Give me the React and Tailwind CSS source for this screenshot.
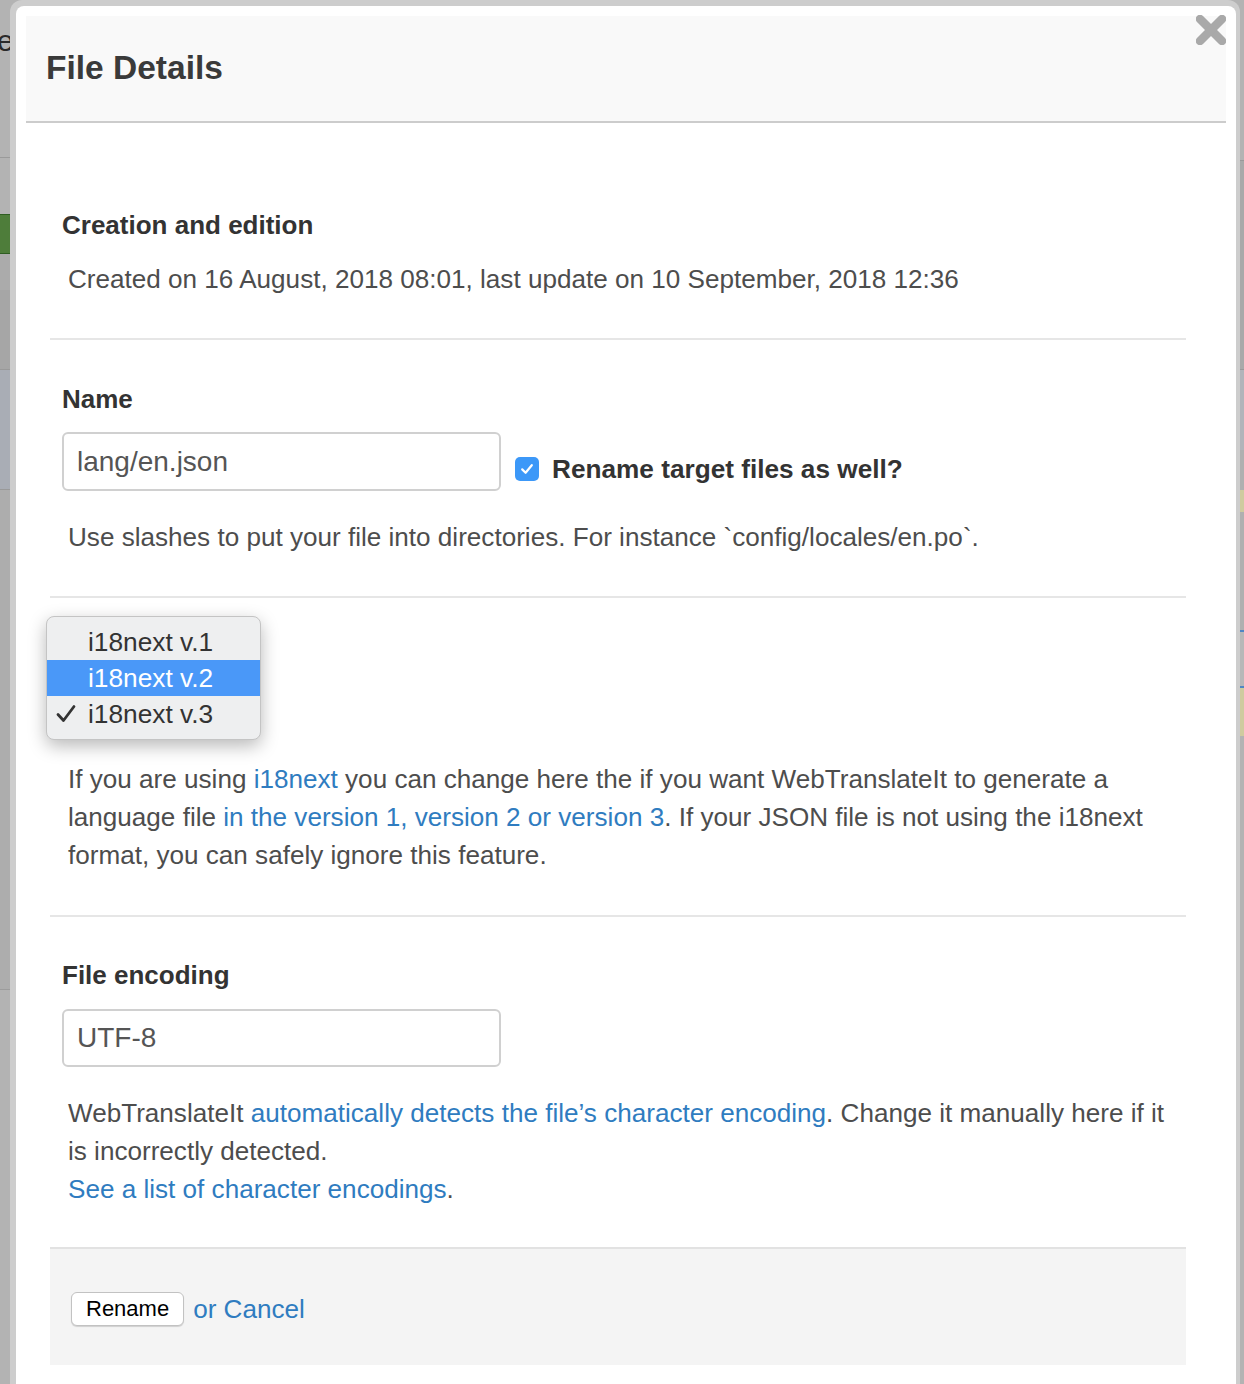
import React from "react";

const Link = ({ children }) => <span className="text-[#2f7cc0]">{children}</span>;

function CloseX() {
  return (
    <svg width="30" height="30" viewBox="0 0 30 30" className="block">
      <line x1="4" y1="4" x2="26" y2="26" stroke="#a9a9a9" strokeWidth="8.5" strokeLinecap="round" />
      <line x1="26" y1="4" x2="4" y2="26" stroke="#a9a9a9" strokeWidth="8.5" strokeLinecap="round" />
    </svg>
  );
}

function Hr() {
  return <div className="h-[2px] bg-[#e6e6e6]" />;
}

export default function App() {
  return (
    <div className="relative w-[1244px] h-[1384px] overflow-hidden bg-[#b3b3b3] font-['Liberation_Sans',Arial,sans-serif]">
      {/* dimmed page behind the modal */}
      <div className="flex justify-between h-full">
        <div className="w-[10px] flex flex-col">
          <div className="h-[24px]" />
          <div className="h-[34px] text-[30px] leading-[34px] text-[#2a2a2a] -ml-[3px] whitespace-nowrap">e</div>
          <div className="h-[60px]" />
          <div className="h-[20px] w-[6px] ml-[10px] border-2 border-[#2d6aa3]" />
          <div className="h-[20px] border-b border-[#9a9a9a]" />
          <div className="h-[56px]" />
          <div className="h-[40px] bg-[#4e7d3a] border-y border-[#2f5e22]" />
          <div className="h-[36px] bg-[#ababab]" />
          <div className="h-[80px] bg-[#a6a6a6] border-b border-[#999]" />
          <div className="h-[120px] bg-[#a9adb5] border-b border-[#999]" />
          <div className="h-[500px] bg-[#adadad] border-b border-[#9c9c9c]" />
        </div>
        <div className="w-[4px] flex flex-col">
          <div className="h-[160px]" />
          <div className="h-[210px] bg-[#a9a9a9] border-y border-[#999]" />
          <div className="h-[80px] bg-[#b1b4ba]" />
          <div className="h-[40px] bg-[#b0b0b0]" />
          <div className="h-[22px] bg-[#cfcb9f]" />
          <div className="h-[120px] bg-[#b0b0b0] border-b-2 border-[#4f86c4]" />
          <div className="h-[56px] bg-[#b8b8b8] border-b-2 border-[#4f86c4]" />
          <div className="h-[48px] bg-[#cfcb9f]" />
        </div>
      </div>

      {/* modal */}
      <div className="absolute left-[10px] top-0 w-[1230px] h-[1400px] rounded-t-[12px] bg-[#cdcdcd] pl-[6px] pr-[4px] pt-[6px]">
        <div className="h-full bg-white rounded-t-[8px] pt-[10px]">
          {/* header */}
          <div className="relative mx-[10px] h-[107px] bg-[#f9f9f9] border-b-2 border-[#cccccc] pl-[20px] pt-[32px]">
            <h1 className="text-[33.5px] leading-[40px] font-bold text-[#3a3a3a]">File Details</h1>
            <div className="absolute right-0 top-[-1px]">
              <CloseX />
            </div>
          </div>

          {/* body */}
          <div className="ml-[34px] w-[1136px] text-[26.1px] leading-[38px] text-[#4d4d4d]">
            {/* creation */}
            <div className="px-[12px] pt-[83px] pb-[40px]">
              <h3 className="font-bold text-[#333] text-[26px]">Creation and edition</h3>
              <p className="mt-[16px] pl-[6px] whitespace-nowrap">
                Created on 16 August, 2018 08:01, last update on 10 September, 2018 12:36
              </p>
            </div>
            <Hr />

            {/* name */}
            <div className="px-[12px] pt-[40px] pb-[40px]">
              <h3 className="font-bold text-[#333] text-[26px]">Name</h3>
              <div className="mt-[14px] flex items-center">
                <div className="w-[439px] h-[59px] border-2 border-[#d0d0d0] rounded-[6px] flex items-center pl-[13px] text-[28px] text-[#555]">
                  lang/en.json
                </div>
                <div className="ml-[14px] mt-[14px] flex items-center">
                  <div className="w-[24px] h-[24px] rounded-[5px] bg-[#3c98f8] flex items-center justify-center">
                    <svg width="16" height="16" viewBox="0 0 16 16">
                      <path d="M3.2 8.4 L6.6 11.8 L12.8 4.2" stroke="white" strokeWidth="2.2" fill="none" strokeLinecap="round" strokeLinejoin="round" />
                    </svg>
                  </div>
                  <span className="ml-[13px] font-bold text-[#333] text-[26.2px]">Rename target files as well?</span>
                </div>
              </div>
              <p className="mt-[27px] pl-[6px] whitespace-nowrap">
                Use slashes to put your file into directories. For instance `config/locales/en.po`.
              </p>
            </div>
            <Hr />

            {/* i18next */}
            <div className="px-[12px] pb-[41px]">
              <div className="relative h-[162px]">
                <div className="absolute left-[-16px] top-[18px] w-[215px] rounded-[8px] border border-[#c4c4c4] bg-[#eeeff0] shadow-[0_6px_18px_rgba(0,0,0,0.28)] py-[7px] text-[26.3px] leading-[36px] text-[#333]">
                  <div className="pl-[41px]">i18next v.1</div>
                  <div className="pl-[41px] bg-[#4a98f8] text-white">i18next v.2</div>
                  <div className="relative pl-[41px]">
                    <svg width="20" height="20" viewBox="0 0 20 20" className="absolute left-[9px] top-[8px]">
                      <path d="M2 10.5 L7.5 16.5 L18 2.5" stroke="#333" strokeWidth="2.8" fill="none" strokeLinecap="round" strokeLinejoin="round" />
                    </svg>
                    i18next v.3
                  </div>
                </div>
              </div>
              <p className="pl-[6px] whitespace-nowrap">
                If you are using <Link>i18next</Link> you can change here the if you want WebTranslateIt to generate a
                <br />
                language file <Link>in the version 1, version 2 or version 3</Link>. If your JSON file is not using the i18next
                <br />
                format, you can safely ignore this feature.
              </p>
            </div>
            <Hr />

            {/* encoding */}
            <div className="px-[12px] pt-[39px] pb-[39px]">
              <h3 className="font-bold text-[#333] text-[26px]">File encoding</h3>
              <div className="mt-[15px] w-[439px] h-[58px] border-2 border-[#d0d0d0] rounded-[6px] flex items-center pl-[13px] text-[28px] text-[#555]">
                UTF-8
              </div>
              <p className="mt-[27px] pl-[6px] whitespace-nowrap">
                WebTranslateIt <Link>automatically detects the file’s character encoding</Link>. Change it manually here if it
                <br />
                is incorrectly detected.
                <br />
                <Link>See a list of character encodings</Link>.
              </p>
            </div>

            {/* footer */}
            <div className="h-[118px] bg-[#f4f4f4] border-t-2 border-[#e2e2e2] pl-[21px] pt-[4px] flex items-center">
              <button className="h-[34px] px-[14px] bg-white border border-[#c2c2c2] rounded-[6px] shadow-[0_1px_1px_rgba(0,0,0,0.15)] text-[22px] leading-[32px] text-black">
                Rename
              </button>
              <span className="ml-[9px] text-[#2f7cc0]">or Cancel</span>
            </div>
          </div>
        </div>
      </div>
    </div>
  );
}
